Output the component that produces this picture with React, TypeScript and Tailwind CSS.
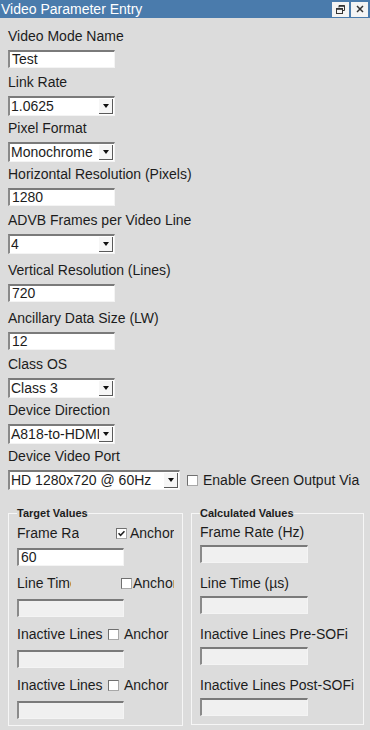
import React from "react"

// ─── Win-style controls ───────────────────────────────────────────────────────

function TextBox({ value = "", disabled = false, className = "" }: { value?: string; disabled?: boolean; className?: string }) {
  return (
    <div
      className={`h-[18px] shrink-0 overflow-hidden whitespace-nowrap border-t-2 border-l-2 border-r border-b border-t-[#7a7a7a] border-l-[#8a8a8a] border-r-[#f4f4f4] border-b-[#f4f4f4] pl-[2px] text-[14px] leading-[15px] ${disabled ? "bg-[#f0f0f0]" : "bg-white"} ${className}`}
    >
      {value}
    </div>
  )
}

function ComboBox({ value, className = "" }: { value: string; className?: string }) {
  return (
    <div
      className={`flex h-[20px] shrink-0 items-stretch border-t-2 border-l-2 border-r border-b border-t-[#7a7a7a] border-l-[#8a8a8a] border-r-[#f4f4f4] border-b-[#f4f4f4] bg-white ${className}`}
    >
      <span className="flex-1 overflow-hidden whitespace-nowrap pl-[1px] text-[14px] leading-[17px]">{value}</span>
      <span className="my-[1px] mr-[1px] flex w-[14px] shrink-0 items-center justify-center border-r border-b border-r-[#5a5a5a] border-b-[#5a5a5a] bg-[#f6f6f6]">
        <span className="h-0 w-0 border-x-[3px] border-t-[4px] border-x-transparent border-t-[#111]" />
      </span>
    </div>
  )
}

function Check({ checked = false, className = "" }: { checked?: boolean; className?: string }) {
  return (
    <span
      className={`flex h-[11px] w-[11px] shrink-0 items-center justify-center border border-t-[#6f6f6f] border-l-[#6f6f6f] border-r-[#a8a8a8] border-b-[#a8a8a8] bg-white ${className}`}
    >
      {checked && (
        <svg width="7" height="7" viewBox="0 0 7 7">
          <path d="M0.5 3.2 L2.6 5.4 L6.5 1.2" fill="none" stroke="#222" strokeWidth="1.6" />
        </svg>
      )}
    </span>
  )
}

// ─── Data ─────────────────────────────────────────────────────────────────────

const fields = [
  { label: "Video Mode Name", kind: "text", value: "Test", mt: "mt-0" },
  { label: "Link Rate", kind: "combo", value: "1.0625", mt: "mt-[4px]" },
  { label: "Pixel Format", kind: "combo", value: "Monochrome", mt: "mt-[2px]" },
  { label: "Horizontal Resolution (Pixels)", kind: "text", value: "1280", mt: "mt-[2px]" },
  { label: "ADVB Frames per Video Line", kind: "combo", value: "4", mt: "mt-[4px]" },
  { label: "Vertical Resolution (Lines)", kind: "text", value: "720", mt: "mt-[6px]" },
  { label: "Ancillary Data Size (LW)", kind: "text", value: "12", mt: "mt-[6px]" },
  { label: "Class OS", kind: "combo", value: "Class 3", mt: "mt-[4px]" },
  { label: "Device Direction", kind: "combo", value: "A818-to-HDMI", mt: "mt-[2px]" },
]

const targetRows = [
  { label: "Frame Rate (Hz)", lw: "w-[62px]", cm: "ml-[37px]", am: "ml-[3px]", checked: true, value: "60", disabled: false },
  { label: "Line Time (µs)", lw: "w-[54px]", cm: "ml-[50px]", am: "ml-[1px]", checked: false, value: "", disabled: true },
  { label: "Inactive Lines Pre-SOFi", lw: "w-[89px]", cm: "ml-[2px]", am: "ml-[5px]", checked: false, value: "", disabled: true },
  { label: "Inactive Lines Post-SOFi", lw: "w-[89px]", cm: "ml-[2px]", am: "ml-[5px]", checked: false, value: "", disabled: true },
]

const calcRows = ["Frame Rate (Hz)", "Line Time (µs)", "Inactive Lines Pre-SOFi", "Inactive Lines Post-SOFi"]

// ─── Window ───────────────────────────────────────────────────────────────────

export default function App() {
  return (
    <div className="h-[730px] w-[370px] overflow-hidden bg-[#dcdcdc] font-['Liberation_Sans',Arial,sans-serif] text-[14px] text-[#1c1c1c]">
      {/* Title bar */}
      <div className="flex h-[18px] items-center bg-[#4a7bac]">
        <span className="pl-[1px] text-[14px] leading-[18px] text-white">Video Parameter Entry</span>
        <div className="ml-auto mr-[2px] flex gap-[2px]">
          <span className="flex h-[15px] w-[17px] items-center justify-center bg-[#f4f4f4]">
            <svg width="9" height="9" viewBox="0 0 9 9" fill="none" stroke="#333">
              <path d="M3 2.5V0.5H8.5V5.5H6.5" strokeWidth="1" />
              <path d="M3 1H8.5" strokeWidth="1.6" />
              <rect x="0.5" y="3.5" width="6" height="5" strokeWidth="1" />
              <path d="M0.5 4H6.5" strokeWidth="1.6" />
            </svg>
          </span>
          <span className="flex h-[15px] w-[17px] items-center justify-center bg-[#f4f4f4]">
            <svg width="8" height="8" viewBox="0 0 8 8" stroke="#333" strokeWidth="1.5">
              <path d="M1 1L7 7M7 1L1 7" />
            </svg>
          </span>
        </div>
      </div>

      {/* Form */}
      <div className="flex flex-col px-[8px] pt-[8px]">
        {fields.map(f => (
          <div key={f.label} className={`flex flex-col ${f.mt}`}>
            <span className="h-[20px] whitespace-nowrap leading-[20px]">{f.label}</span>
            {f.kind === "text" ? (
              <TextBox value={f.value} className="mt-[4px] w-[107px]" />
            ) : (
              <ComboBox value={f.value} className="mt-[4px] w-[107px]" />
            )}
          </div>
        ))}

        <div className="mt-[2px] flex flex-col">
          <span className="h-[20px] whitespace-nowrap leading-[20px]">Device Video Port</span>
          <div className="mt-[4px] flex items-center whitespace-nowrap">
            <ComboBox value="HD 1280x720 @ 60Hz" className="w-[172px]" />
            <Check className="ml-[7px]" />
            <span className="ml-[5px] leading-[20px]">Enable Green Output Via</span>
          </div>
        </div>

        {/* Group boxes */}
        <div className="mt-[16px] flex gap-[8px]">
          <fieldset className="h-[220px] w-[175px] shrink-0 border border-[#f6f6f6] px-[8px]">
            <legend className="text-[11px] font-bold leading-[14px]">Target Values</legend>
            {targetRows.map((r, i) => (
              <div key={r.label} className={`flex flex-col ${i === 0 ? "mt-[3px]" : "mt-[7px]"}`}>
                <div className="flex h-[20px] w-[157px] items-center overflow-hidden whitespace-nowrap">
                  <span className={`${r.lw} shrink-0 overflow-hidden leading-[20px]`}>{r.label}</span>
                  <Check checked={r.checked} className={r.cm} />
                  <span className={`${r.am} leading-[20px]`}>Anchor</span>
                </div>
                <TextBox value={r.value} disabled={r.disabled} className={`${i === 0 ? "mt-[5px]" : "mt-[6px]"} w-[107px]`} />
              </div>
            ))}
          </fieldset>

          <fieldset className="h-[219px] w-[173px] shrink-0 border border-[#f6f6f6] px-[8px]">
            <legend className="text-[11px] font-bold leading-[14px]">Calculated Values</legend>
            {calcRows.map((l, i) => (
              <div key={l} className={`flex flex-col ${i === 0 ? "mt-[2px]" : "mt-[10px]"}`}>
                <span className="h-[20px] whitespace-nowrap leading-[20px]">{l}</span>
                <TextBox disabled className="mt-[3px] w-[108px]" />
              </div>
            ))}
          </fieldset>
        </div>
      </div>
    </div>
  )
}
